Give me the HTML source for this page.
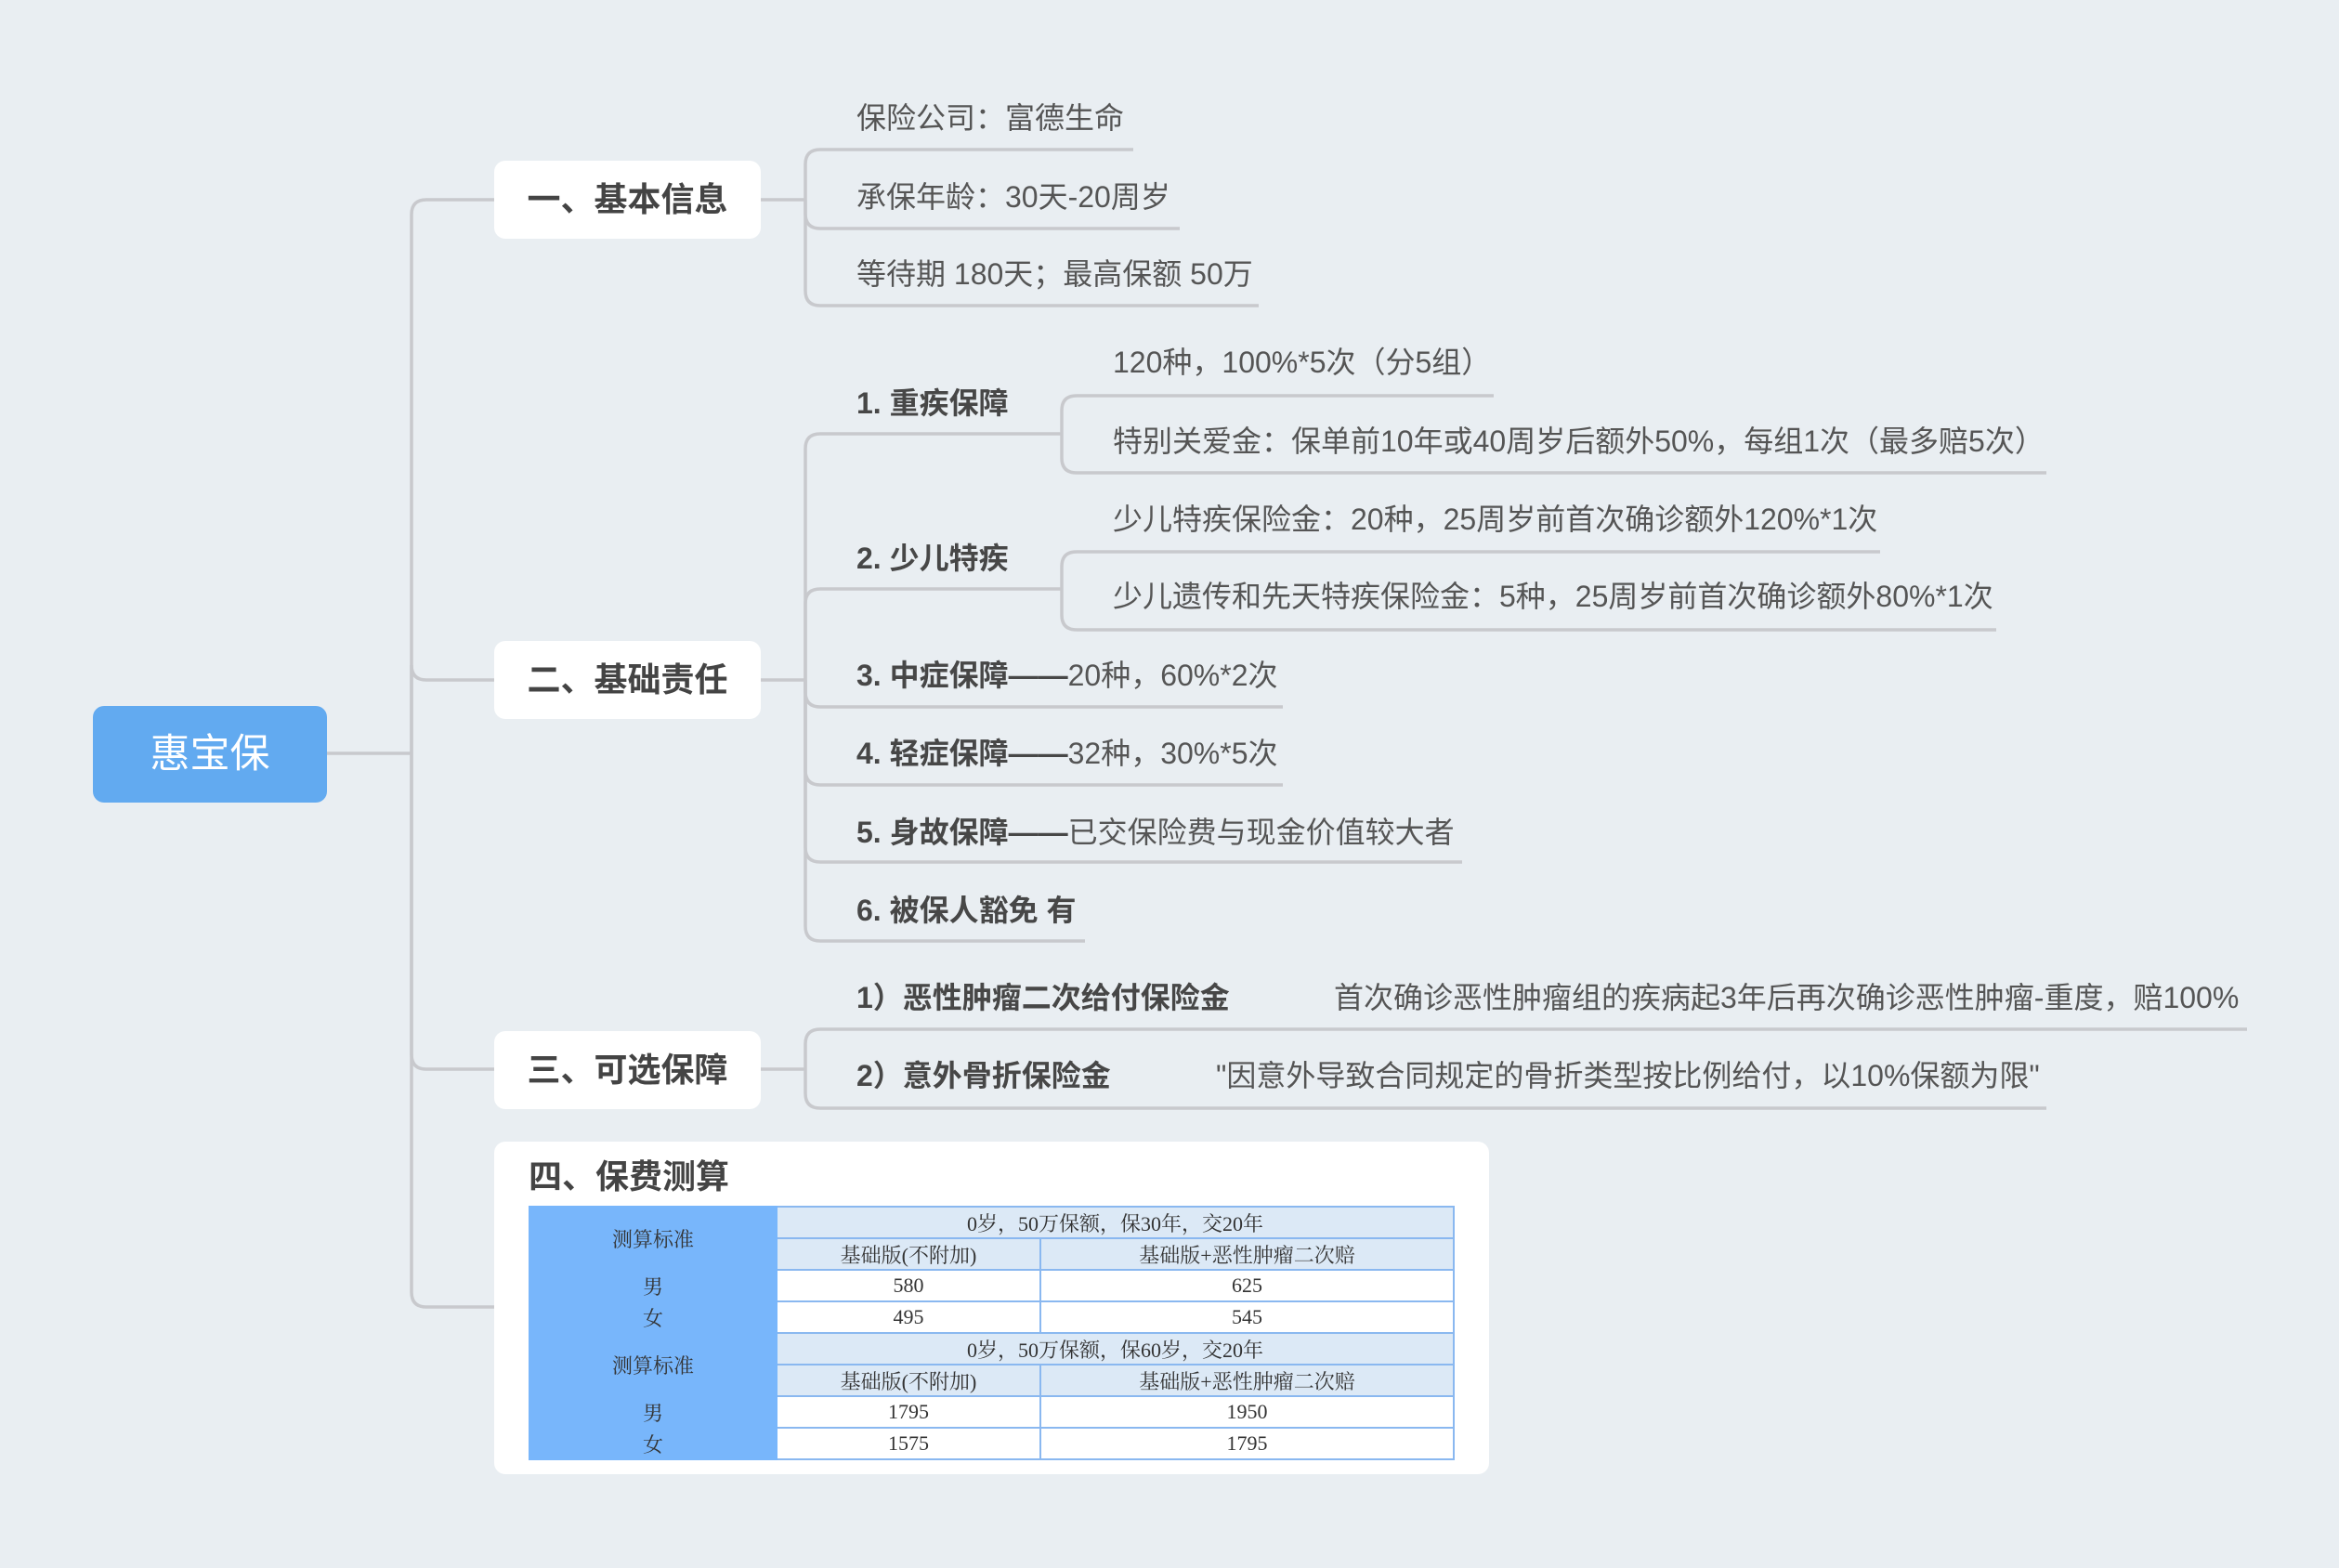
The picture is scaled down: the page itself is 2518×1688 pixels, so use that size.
<!DOCTYPE html>
<html><head><meta charset="utf-8">
<style>
html,body{margin:0;padding:0}
body{width:2518px;height:1688px;background:#e9eef2;position:relative;overflow:hidden;font-family:"Liberation Sans","Noto Sans CJK SC",sans-serif}
.t{position:absolute;height:40px;line-height:40px;font-size:32px;color:#555;white-space:nowrap}
.b{font-weight:bold;color:#474747}
.box{position:absolute;left:532px;width:287px;height:84px;background:#fff;border-radius:12px;font-size:36px;font-weight:bold;color:#444;text-align:center;line-height:84px}
svg{position:absolute;left:0;top:0}
table{border-collapse:collapse;position:absolute;left:569px;top:1298px;font-family:"Liberation Serif","Noto Serif CJK SC",serif;font-size:22px;color:#333;table-layout:fixed}
td{border:2px solid #8ab8f0;height:32px;padding:0;text-align:center;background:#fff}
td.l{background:#78b6fb;border-color:#78b6fb}
td.h{background:#dce9f6}
</style></head><body>
<svg width="2518" height="1688" fill="none" stroke="#c8c9cd" stroke-width="3.5">
<path d="M352 811 H443"/>
<path d="M443 811 V231 Q443 215 459 215 H532"/>
<path d="M443 811 V716 Q443 732 459 732 H532"/>
<path d="M443 811 V1135 Q443 1151 459 1151 H532"/>
<path d="M443 811 V1391 Q443 1407 459 1407 H532"/>
<path d="M819 215 H867"/>
<path d="M867 215 V177 Q867 161 883 161 H1220"/>
<path d="M867 215 V230 Q867 246 883 246 H1270"/>
<path d="M867 215 V313 Q867 329 883 329 H1355"/>
<path d="M819 732 H867"/>
<path d="M867 732 V483 Q867 467 883 467 H1143"/>
<path d="M867 732 V650 Q867 634 883 634 H1143"/>
<path d="M867 732 V745 Q867 761 883 761 H1381"/>
<path d="M867 732 V829 Q867 845 883 845 H1381"/>
<path d="M867 732 V912 Q867 928 883 928 H1574"/>
<path d="M867 732 V997 Q867 1013 883 1013 H1168"/>
<path d="M1143 467 V442 Q1143 426 1159 426 H1608"/>
<path d="M1143 467 V493 Q1143 509 1159 509 H2203"/>
<path d="M1143 634 V610 Q1143 594 1159 594 H2024"/>
<path d="M1143 634 V662 Q1143 678 1159 678 H2149"/>
<path d="M819 1151 H867"/>
<path d="M867 1151 V1124 Q867 1108 883 1108 H2419"/>
<path d="M867 1151 V1177 Q867 1193 883 1193 H2203"/>
</svg>
<div style="position:absolute;left:100px;top:760px;width:252px;height:104px;background:#62aaf0;border-radius:12px;color:#fff;font-size:43px;text-align:center;line-height:104px">惠宝保</div>
<div class="box" style="top:173px">一、基本信息</div>
<div class="box" style="top:690px">二、基础责任</div>
<div class="box" style="top:1110px">三、可选保障</div>

<div class="t" style="left:922px;top:107px">保险公司：富德生命</div>
<div class="t" style="left:922px;top:192px">承保年龄：30天-20周岁</div>
<div class="t" style="left:922px;top:275px">等待期 180天；最高保额 50万</div>

<div class="t b" style="left:922px;top:414px">1. 重疾保障</div>
<div class="t" style="left:1198px;top:370px">120种，100%*5次（分5组）</div>
<div class="t" style="left:1198px;top:455px">特别关爱金：保单前10年或40周岁后额外50%，每组1次（最多赔5次）</div>
<div class="t b" style="left:922px;top:581px">2. 少儿特疾</div>
<div class="t" style="left:1198px;top:539px">少儿特疾保险金：20种，25周岁前首次确诊额外120%*1次</div>
<div class="t" style="left:1198px;top:622px">少儿遗传和先天特疾保险金：5种，25周岁前首次确诊额外80%*1次</div>
<div class="t" style="left:922px;top:707px"><span class="b">3. 中症保障——</span>20种，60%*2次</div>
<div class="t" style="left:922px;top:791px"><span class="b">4. 轻症保障——</span>32种，30%*5次</div>
<div class="t" style="left:922px;top:876px"><span class="b">5. 身故保障——</span>已交保险费与现金价值较大者</div>
<div class="t b" style="left:922px;top:960px">6. 被保人豁免 有</div>

<div class="t b" style="left:922px;top:1054px">1）恶性肿瘤二次给付保险金</div>
<div class="t" style="left:1436px;top:1054px">首次确诊恶性肿瘤组的疾病起3年后再次确诊恶性肿瘤-重度，赔100%</div>
<div class="t b" style="left:922px;top:1138px">2）意外骨折保险金</div>
<div class="t" style="left:1309px;top:1138px">"因意外导致合同规定的骨折类型按比例给付，以10%保额为限"</div>

<div style="position:absolute;left:532px;top:1229px;width:1071px;height:358px;background:#fff;border-radius:12px"></div>
<div style="position:absolute;left:569px;top:1244px;font-size:36px;font-weight:bold;color:#444;line-height:46px">四、保费测算</div>
<table>
<colgroup><col style="width:266px"><col style="width:284px"><col style="width:445px"></colgroup>
<tr><td class="l" rowspan="2">测算标准</td><td class="h" colspan="2">0岁，50万保额，保30年，交20年</td></tr>
<tr><td class="h">基础版(不附加)</td><td class="h">基础版+恶性肿瘤二次赔</td></tr>
<tr><td class="l">男</td><td>580</td><td>625</td></tr>
<tr><td class="l">女</td><td>495</td><td>545</td></tr>
<tr><td class="l" rowspan="2">测算标准</td><td class="h" colspan="2">0岁，50万保额，保60岁，交20年</td></tr>
<tr><td class="h">基础版(不附加)</td><td class="h">基础版+恶性肿瘤二次赔</td></tr>
<tr><td class="l">男</td><td>1795</td><td>1950</td></tr>
<tr><td class="l">女</td><td>1575</td><td>1795</td></tr>
</table>
</body></html>
